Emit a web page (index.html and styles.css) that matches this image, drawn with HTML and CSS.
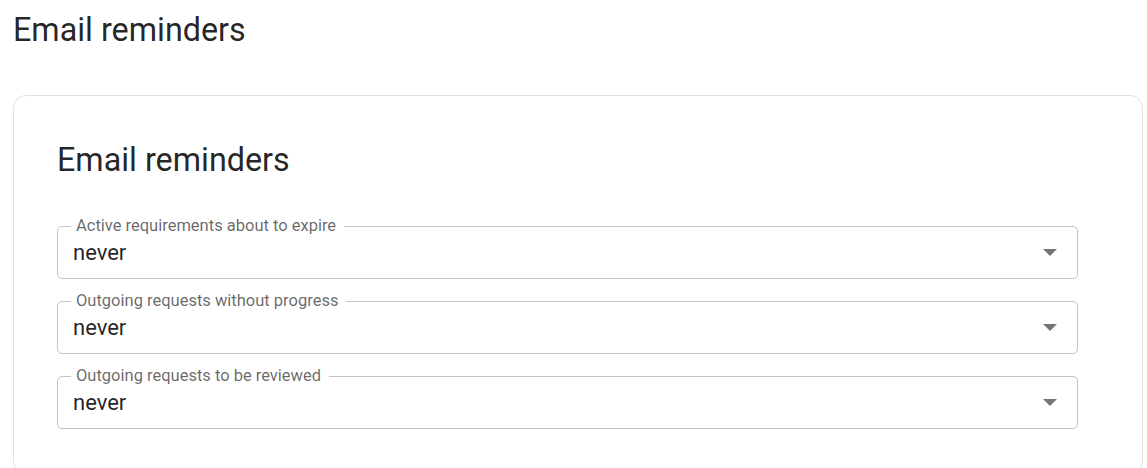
FILE: index.html
```html
<!DOCTYPE html>
<html lang="en">
<head>
<meta charset="utf-8">
<title>Email reminders</title>
<link rel="stylesheet" href="styles.css">
</head>
<body>
  <h1 class="page-title">Email reminders</h1>
  <section class="card">
    <h2 class="card-title">Email reminders</h2>
    <div class="fields">
      <div class="select">
        <span class="select-label">Active requirements about to expire</span>
        <span class="select-value">never</span>
        <svg class="select-arrow" viewBox="0 0 14 7" width="14" height="7" aria-hidden="true"><path d="M0 0L7 7L14 0Z"/></svg>
      </div>
      <div class="select">
        <span class="select-label">Outgoing requests without progress</span>
        <span class="select-value">never</span>
        <svg class="select-arrow" viewBox="0 0 14 7" width="14" height="7" aria-hidden="true"><path d="M0 0L7 7L14 0Z"/></svg>
      </div>
      <div class="select">
        <span class="select-label">Outgoing requests to be reviewed</span>
        <span class="select-value">never</span>
        <svg class="select-arrow" viewBox="0 0 14 7" width="14" height="7" aria-hidden="true"><path d="M0 0L7 7L14 0Z"/></svg>
      </div>
    </div>
  </section>
</body>
</html>
```

FILE: styles.css
```css
html, body {
  overflow: hidden;
}
body {
  margin: 0;
  padding: 10px 4px 0 13px;
  background: #ffffff;
  font-family: Roboto, "Liberation Sans", Arial, sans-serif;
  color: rgba(0, 0, 0, 0.87);
}
.page-title {
  margin: 0;
  font-size: 32.3px;
  font-weight: 400;
  line-height: 40px;
}
.card {
  margin-top: 45px;
  border: 1px solid #e0e0e0;
  border-radius: 13px;
  padding: 44px 64px 44px 43px;
}
.card-title {
  margin: 0 0 46px 0;
  font-size: 32.3px;
  font-weight: 400;
  line-height: 40px;
}
.fields {
  display: flex;
  flex-direction: column;
  gap: 22px;
}
.select {
  position: relative;
  height: 51px;
  border: 1px solid #c4c4c4;
  border-radius: 5px;
  display: flex;
  align-items: center;
  padding: 0 20px 0 15px;
}
.select-label {
  position: absolute;
  left: 13px;
  top: -9px;
  padding: 0 8px 0 5px;
  background: #ffffff;
  font-size: 16.5px;
  line-height: 16px;
  color: rgba(0, 0, 0, 0.6);
  white-space: nowrap;
}
.select-value {
  flex: 1;
  font-size: 22px;
  color: rgba(0, 0, 0, 0.87);
}
.select-arrow {
  fill: #757575;
}
```
